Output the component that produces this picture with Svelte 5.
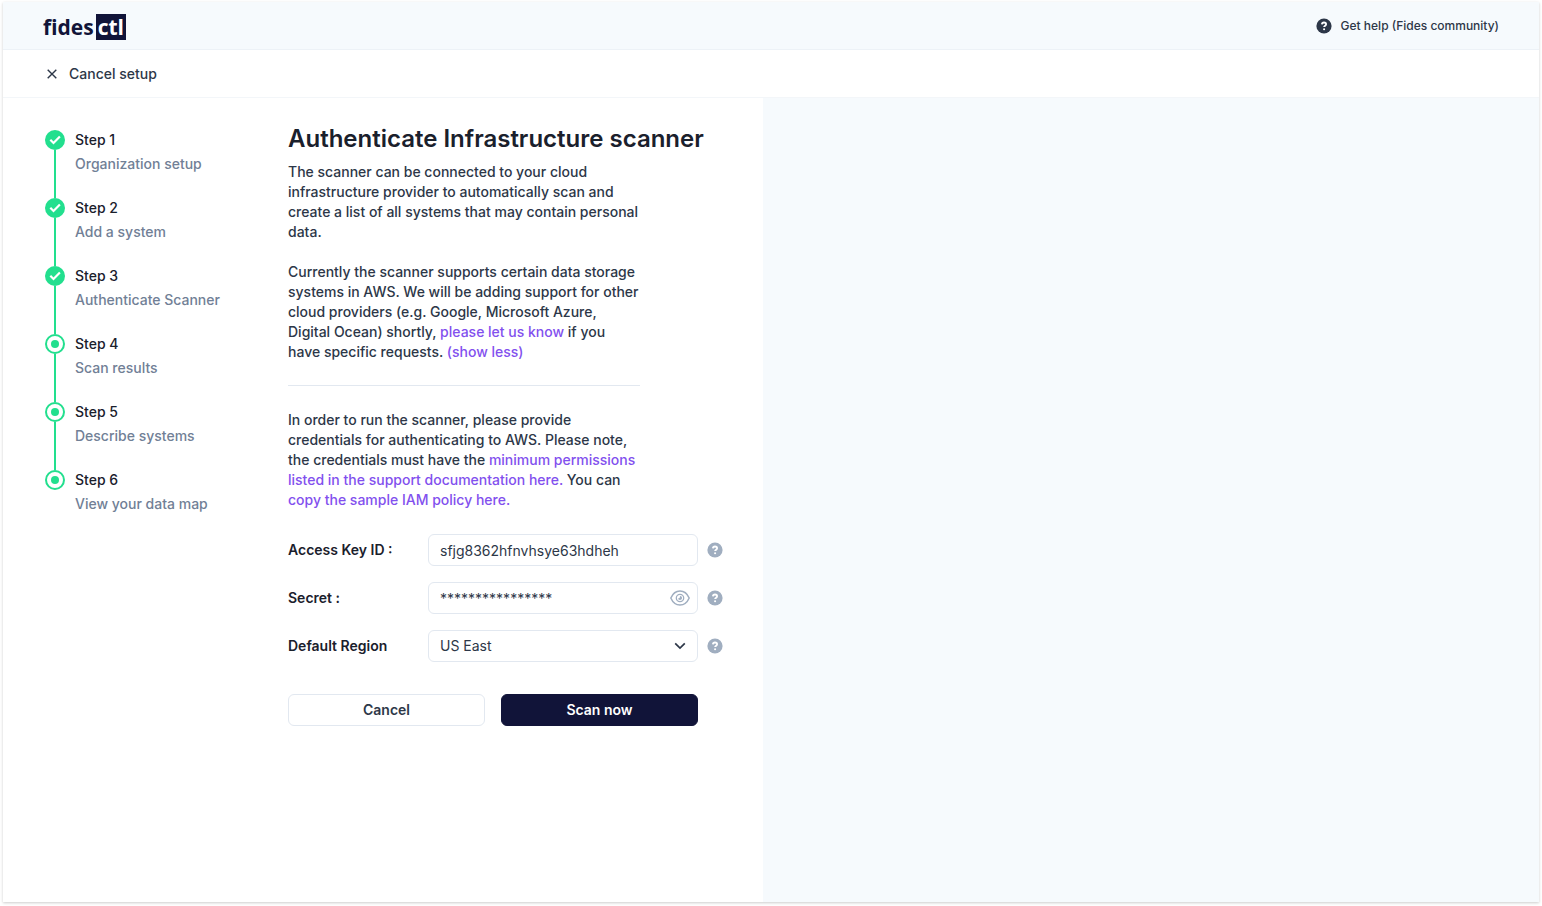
<script>
  const steps = [
    { title: 'Step 1', label: 'Organization setup', done: true },
    { title: 'Step 2', label: 'Add a system', done: true },
    { title: 'Step 3', label: 'Authenticate Scanner', done: true },
    { title: 'Step 4', label: 'Scan results', done: false },
    { title: 'Step 5', label: 'Describe systems', done: false },
    { title: 'Step 6', label: 'View your data map', done: false },
  ];

  let accessKey = $state('sfjg8362hfnvhsye63hdheh');
  let secret = $state('****************');
  let region = $state('US East');
</script>

{#snippet helpIcon()}
  <svg class="help-icon" viewBox="0 0 16 16" width="16" height="16" aria-hidden="true">
    <circle cx="8" cy="8" r="7.6" fill="currentColor" />
    <path d="M5.9 6.4C6 5.200 6.900 4.500 8 4.500c1.200 0 2.100.7 2.100 1.700 0 1.500-2 1.400-2 2.900" fill="none" stroke="#fff" stroke-width="1.800" />
    <circle cx="8.100" cy="11.200" r="1.050" fill="#fff" />
  </svg>
{/snippet}

<div class="page">
  <div class="shell">
    <header class="topbar">
      <a class="logo" href="#home"><span>fides</span><span class="logo-box">ctl</span></a>
      <a class="help-link" href="#community">{@render helpIcon()}Get help (Fides community)</a>
    </header>

    <div class="subbar">
      <button class="cancel-setup" type="button">
        <svg viewBox="0 0 10 10" width="10" height="10" aria-hidden="true">
          <path d="M0.700 0.700l8.600 8.600M9.300 0.700l-8.600 8.600" fill="none" stroke="currentColor" stroke-width="1.400" />
        </svg>
        Cancel setup
      </button>
    </div>

    <div class="body">
      <main class="main">
        <ol class="steps">
          {#each steps as step}
            <li class="step">
              <div class="rail">
                {#if step.done}
                  <svg viewBox="0 0 20 20" width="20" height="20" aria-hidden="true">
                    <circle cx="10" cy="10" r="10" fill="#22df8e" />
                    <path d="M5.300 9.800l3.200 3.200 6.400-6.500" fill="none" stroke="#fff" stroke-width="2.200" />
                  </svg>
                {:else}
                  <svg viewBox="0 0 20 20" width="20" height="20" aria-hidden="true">
                    <circle cx="10" cy="10" r="9" fill="#fff" stroke="#22df8e" stroke-width="2" />
                    <circle cx="10" cy="10" r="4" fill="#22df8e" />
                  </svg>
                {/if}
              </div>
              <div class="step-text">
                <span class="step-title">{step.title}</span>
                <span class="step-label">{step.label}</span>
              </div>
            </li>
          {/each}
        </ol>

        <section class="content">
          <h1>Authenticate Infrastructure scanner</h1>
          <div class="copy">
            <p>
              The scanner can be connected to your cloud infrastructure provider to automatically scan
              and create a list of all systems that may contain personal data.
            </p>
            <p>
              Currently the scanner supports certain data storage systems in AWS. We will be adding
              support for other cloud providers (e.g. Google, Microsoft Azure, Digital Ocean) shortly,
              <a href="#contact">please let us know</a> if you have specific requests.
              <a href="#less">(show less)</a>
            </p>
            <hr />
            <p>
              In order to run the scanner, please provide credentials for authenticating to AWS. Please
              note, the credentials must have the
              <a href="#permissions">minimum permissions listed in the support documentation here.</a>
              You can <a href="#policy">copy the sample IAM policy here.</a>
            </p>
          </div>

          <form class="form" onsubmit={(e) => e.preventDefault()}>
            <div class="field">
              <label for="access-key">Access Key ID :</label>
              <div class="control">
                <input id="access-key" type="text" bind:value={accessKey} />
              </div>
              <button class="hint" type="button" aria-label="About the access key ID">{@render helpIcon()}</button>
            </div>
            <div class="field">
              <label for="secret">Secret :</label>
              <div class="control">
                <input id="secret" type="text" autocomplete="off" bind:value={secret} />
                <button class="adornment eye" type="button" aria-label="Show secret">
                  <svg viewBox="0 0 20 16" width="20" height="16" fill="none" stroke="currentColor" aria-hidden="true">
                    <path d="M0.800 8C2.800 3.500 6.200 1 10 1s7.200 2.500 9.200 7c-2 4.500-5.400 7-9.200 7S2.800 12.500 0.800 8z" stroke-width="1.500" stroke-linejoin="round" />
                    <circle cx="10" cy="8" r="3.700" stroke-width="1.300" />
                    <path d="M9.900 5.900a2.100 2.100 0 1 1-2 2.400c1.200 0.400 2.400-0.800 2-2.400z" fill="currentColor" stroke="none" />
                  </svg>
                </button>
              </div>
              <button class="hint" type="button" aria-label="About the secret">{@render helpIcon()}</button>
            </div>
            <div class="field">
              <label for="region">Default Region</label>
              <div class="control">
                <select id="region" bind:value={region}>
                  <option>US East</option>
                  <option>US West</option>
                </select>
                <span class="adornment chevron">
                  <svg viewBox="0 0 12 8" width="12" height="8" aria-hidden="true">
                    <path d="M1.200 1.300l4.800 4.800 4.800-4.800" fill="none" stroke="currentColor" stroke-width="1.700" />
                  </svg>
                </span>
              </div>
              <button class="hint" type="button" aria-label="About the default region">{@render helpIcon()}</button>
            </div>
            <div class="actions">
              <button class="btn" type="button">Cancel</button>
              <button class="btn primary" type="submit">Scan now</button>
            </div>
          </form>
        </section>
      </main>
      <aside class="panel"></aside>
    </div>
  </div>
</div>

<style>
  :global(body) {
    margin: 0;
    background: #fff;
  }
  .page,
  .page * {
    box-sizing: border-box;
  }
  .page {
    display: flex;
    min-height: 100vh;
    padding: 2px 3px 4px;
    font-family: Inter, 'Liberation Sans', sans-serif;
    font-size: 14px;
    line-height: 20px;
    font-weight: 500;
    color: #2d3748;
  }
  .shell {
    flex: 1;
    display: flex;
    flex-direction: column;
    background: #fff;
    box-shadow: 0 1px 3px rgba(0, 0, 0, 0.15), 0 1px 2px rgba(0, 0, 0, 0.06);
  }
  button,
  input,
  select {
    font: inherit;
    color: inherit;
  }
  button {
    border: 0;
    padding: 0;
    background: none;
    cursor: pointer;
  }
  svg {
    display: block;
    flex: none;
  }
  a {
    color: #8250ee;
    text-decoration: none;
  }
  .topbar {
    display: flex;
    align-items: center;
    justify-content: space-between;
    height: 48px;
    padding: 0 40px;
    background: #f6fafd;
    border-bottom: 1px solid #edf2f7;
  }
  .logo {
    display: flex;
    align-items: center;
    gap: 2px;
    margin-top: 2px;
    font-family: 'Open Sans', sans-serif;
    font-size: 21px;
    line-height: 26px;
    font-weight: 700;
    color: #111439;
  }
  .logo-box {
    padding: 0 2px;
    background: #111439;
    color: #fff;
  }
  .help-link {
    display: flex;
    align-items: center;
    gap: 9px;
    font-size: 12px;
    color: #2d3748;
  }
  .subbar {
    display: flex;
    align-items: center;
    height: 48px;
    padding: 0 44px;
    border-bottom: 1px solid #f3f6f9;
  }
  .cancel-setup {
    display: flex;
    align-items: center;
    gap: 12px;
  }
  .body {
    flex: 1;
    display: grid;
    grid-template-columns: 99fr 101fr;
  }
  .main {
    display: flex;
    gap: 64px;
    padding: 24px 40px 24px 42px;
  }
  .panel {
    background: #f6fafd;
  }
  .steps {
    flex: none;
    width: 179px;
    margin: 0;
    padding: 8px 0 0;
    list-style: none;
  }
  .step {
    display: flex;
    gap: 10px;
  }
  .rail {
    display: flex;
    flex-direction: column;
    align-items: center;
    width: 20px;
  }
  .step:not(:last-child) .rail::after {
    content: '';
    flex: 1;
    width: 2px;
    background: #22df8e;
  }
  .step-text {
    display: flex;
    flex-direction: column;
    gap: 4px;
    padding-bottom: 24px;
  }
  .step-title {
    color: #1a202c;
  }
  .step-label {
    color: #718096;
  }
  .content {
    flex: 1;
    max-width: 436px;
  }
  h1 {
    margin: 0 0 6px;
    font-size: 24px;
    line-height: 34px;
    font-weight: 600;
    white-space: nowrap;
    color: #1a202c;
  }
  .copy {
    max-width: 352px;
  }
  p {
    margin: 0 0 20px;
  }
  hr {
    height: 1px;
    margin: 23px 0 24px;
    border: 0;
    background: #e2e8f0;
  }
  .form {
    display: flex;
    flex-direction: column;
    gap: 16px;
    padding-top: 4px;
  }
  .field {
    display: grid;
    grid-template-columns: 140px minmax(0, 270px) 16px;
    align-items: center;
  }
  .field label {
    font-weight: 600;
    color: #1a202c;
  }
  .control {
    position: relative;
  }
  .control input,
  .control select {
    display: block;
    width: 100%;
    height: 32px;
    padding: 0 11px;
    border: 1px solid #e2e8f0;
    border-radius: 6px;
    background: #fff;
    appearance: none;
    font-weight: 400;
  }
  .adornment {
    position: absolute;
    inset: 0 8px 0 auto;
    display: flex;
    align-items: center;
    justify-content: center;
    width: 20px;
  }
  .eye {
    color: #a0aec0;
  }
  .chevron {
    pointer-events: none;
  }
  .hint {
    margin-left: 9px;
    color: #a0aec0;
  }
  .actions {
    display: grid;
    grid-template-columns: 1fr 1fr;
    gap: 16px;
    max-width: 410px;
    padding-top: 16px;
  }
  .btn {
    height: 32px;
    border: 1px solid #e2e8f0;
    border-radius: 6px;
    font-weight: 600;
  }
  .primary {
    border-color: #111439;
    background: #111439;
    color: #fff;
  }
</style>
